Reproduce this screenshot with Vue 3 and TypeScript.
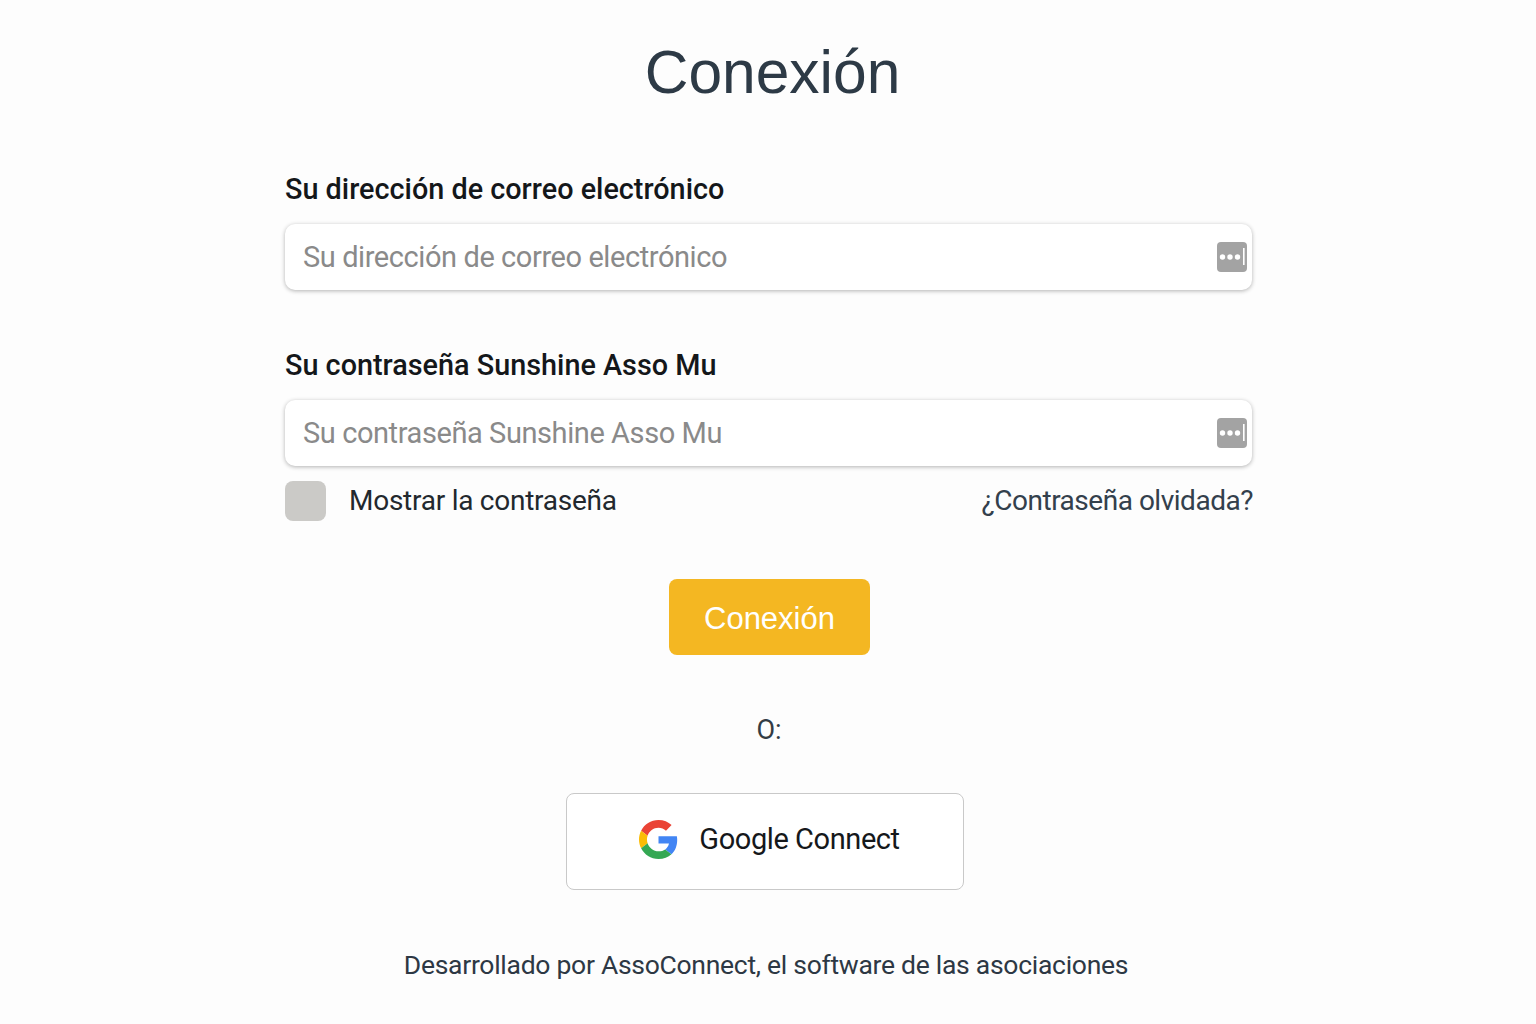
<template>
  <main class="page">
    <h1 class="title">Conexión</h1>

    <form class="form" @submit.prevent>
      <div class="field">
        <label class="label" for="email">Su dirección de correo electrónico</label>
        <div class="input-box">
          <input id="email" class="input" type="email" placeholder="Su dirección de correo electrónico" />
          <svg class="key" viewBox="0 0 30 30" aria-hidden="true">
            <rect width="30" height="30" rx="4" fill="#a3a3a3" />
            <circle cx="5.500" cy="15" r="2.700" fill="#fff" />
            <circle cx="13" cy="15" r="2.700" fill="#fff" />
            <circle cx="20.500" cy="15" r="2.700" fill="#fff" />
            <rect x="26" y="6" width="1.600" height="17" fill="#fff" />
          </svg>
        </div>
      </div>

      <div class="field second">
        <label class="label" for="password">Su contraseña Sunshine Asso Mu</label>
        <div class="input-box">
          <input id="password" class="input" type="password" placeholder="Su contraseña Sunshine Asso Mu" />
          <svg class="key" viewBox="0 0 30 30" aria-hidden="true">
            <rect width="30" height="30" rx="4" fill="#a3a3a3" />
            <circle cx="5.500" cy="15" r="2.700" fill="#fff" />
            <circle cx="13" cy="15" r="2.700" fill="#fff" />
            <circle cx="20.500" cy="15" r="2.700" fill="#fff" />
            <rect x="26" y="6" width="1.600" height="17" fill="#fff" />
          </svg>
        </div>
      </div>

      <div class="options">
        <label class="show">
          <span class="check"></span>
          <span>Mostrar la contraseña</span>
        </label>
        <a class="forgot" href="#">¿Contraseña olvidada?</a>
      </div>

      <div class="submit-row">
        <button class="submit" type="submit">Conexión</button>
      </div>
    </form>

    <p class="or">O:</p>

    <button class="google" type="button">
      <svg class="g-logo" viewBox="0 0 48 48" aria-hidden="true">
        <path fill="#ea4335" d="M24 9.500c3.500 0 6.700 1.200 9.200 3.600l6.900-6.900C35.900 2.400 30.500 0 24 0 14.600 0 6.500 5.400 2.600 13.200l8 6.200C12.500 13.600 17.800 9.500 24 9.500z" />
        <path fill="#4285f4" d="M47 24.500c0-1.600-.1-3.100-.4-4.500H24v9h12.900c-.6 3-2.200 5.500-4.700 7.200l7.700 6C44.400 38 47 31.800 47 24.500z" />
        <path fill="#fbbc05" d="M10.600 28.600c-.5-1.400-.8-3-.8-4.600s.3-3.200.8-4.600l-8-6.200C.9 16.500 0 20.100 0 24s.9 7.500 2.600 10.800l8-6.200z" />
        <path fill="#34a853" d="M24 48c6.500 0 11.900-2.100 15.900-5.800l-7.700-6c-2.200 1.500-4.900 2.300-8.200 2.300-6.200 0-11.500-4.200-13.400-9.900l-8 6.200C6.500 42.600 14.600 48 24 48z" />
      </svg>
      <span>Google Connect</span>
    </button>

    <p class="footer">Desarrollado por AssoConnect, el software de las asociaciones</p>
  </main>
</template>

<script setup lang="ts">
</script>

<style>
html,
body {
  margin: 0;
  background: #fdfdfd;
}
</style>

<style scoped>
.page {
  height: 1024px;
  box-sizing: border-box;
  display: flex;
  flex-direction: column;
  align-items: center;
  padding-top: 35px;
  font-family: Roboto, "Liberation Sans", sans-serif;
  color: #2b3540;
  overflow: hidden;
}

.title {
  margin: 0 0 0 9px;
  font-family: "Liberation Sans", Arial, sans-serif;
  font-size: 60.500px;
  line-height: 74px;
  font-weight: 400;
  color: #2d3a46;
}

.form {
  width: 968px;
  margin-top: 62px;
  margin-left: 2px;
}

.field {
  display: flex;
  flex-direction: column;
}

.second {
  margin-top: 57px;
}

.label {
  font-size: 28.800px;
  line-height: 36px;
  font-weight: 500;
  color: #14171a;
}

.input-box {
  margin: 17px 1px 0 0;
  height: 66px;
  display: flex;
  align-items: center;
  padding: 0 5px 0 18px;
  background: #fff;
  border-radius: 10px;
  box-shadow: 0 1px 4px rgba(0, 0, 0, 0.3);
}

.input {
  flex: 1;
  min-width: 0;
  border: 0;
  outline: 0;
  padding: 0;
  background: transparent;
  font: 400 29px Roboto, "Liberation Sans", sans-serif;
  letter-spacing: -0.42px;
  color: #2b3540;
}

.input::placeholder {
  color: #8a8a8a;
  opacity: 1;
}

.key {
  width: 30px;
  height: 30px;
  flex: none;
}

.options {
  margin-top: 15px;
  display: flex;
  justify-content: space-between;
  align-items: center;
  font-size: 28px;
  line-height: 40px;
}

.show {
  display: flex;
  align-items: center;
  gap: 23px;
  color: #22282e;
  letter-spacing: -0.25px;
}

.check {
  width: 41px;
  height: 40px;
  border-radius: 8px;
  background: #cbcac7;
}

.forgot {
  color: #33404c;
  text-decoration: none;
  letter-spacing: -0.48px;
}

.submit-row {
  margin-top: 58px;
  display: flex;
  justify-content: center;
  padding-left: 1px;
}

.submit {
  width: 201px;
  height: 76px;
  border: 0;
  border-radius: 8px;
  background: #f4b722;
  color: #fff;
  font: 400 31px "Liberation Sans", Arial, sans-serif;
  padding: 3px 0 0;
}

.or {
  margin: 57px 0 0;
  font-size: 27px;
  line-height: 36px;
  color: #333c44;
  padding-left: 2px;
}

.google {
  margin: 45px 6px 0 0;
  width: 398px;
  height: 97px;
  box-sizing: border-box;
  display: flex;
  align-items: center;
  justify-content: center;
  gap: 21px;
  background: #fff;
  border: 1px solid #c9c9c9;
  border-radius: 8px;
  font: 400 29px Roboto, "Liberation Sans", sans-serif;
  letter-spacing: -0.42px;
  color: #15181b;
  padding: 0 0 5px 9px;
}

.g-logo {
  width: 39px;
  height: 39px;
}

.footer {
  margin: 57px 4px 0 0;
  font-size: 26.500px;
  letter-spacing: -0.28px;
  line-height: 36px;
  color: #2d3844;
}
</style>
